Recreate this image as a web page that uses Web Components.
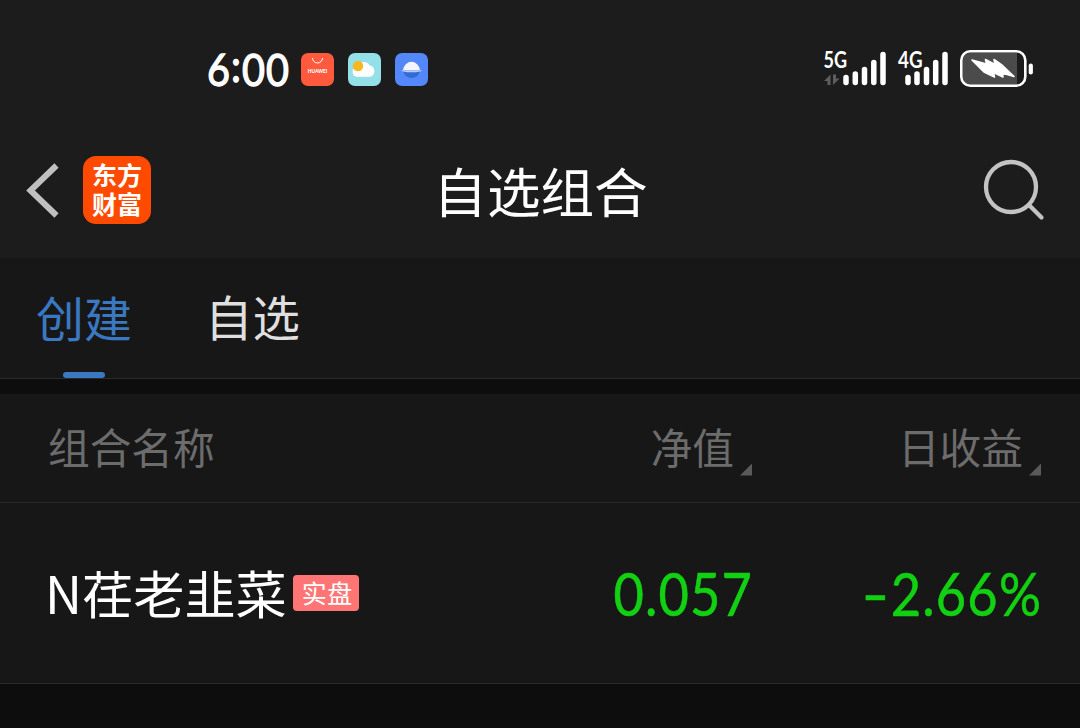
<!DOCTYPE html>
<html lang="zh-CN">
<head>
<meta charset="utf-8">
<title>自选组合</title>
<style>
  body {
    margin: 0;
    background: #0d0d0d;
    font-family: "Noto Sans CJK SC", sans-serif;
    color: #fff;
    overflow: hidden;
  }
</style>
</head>
<body>
<phone-screen>
  <status-bar time="6:00"></status-bar>
  <nav-bar>自选组合</nav-bar>
  <tab-strip>
    <tab-item active>创建</tab-item>
    <tab-item>自选</tab-item>
  </tab-strip>
  <list-header>
    <span slot="name">组合名称</span>
    <sort-label slot="value">净值</sort-label>
    <sort-label slot="profit">日收益</sort-label>
  </list-header>
  <fund-row tag="实盘" value="0.057" profit="-2.66%">N荏老韭菜</fund-row>
</phone-screen>

<script>
const ICONS_SVG = {
  store: `<svg width="33" height="33" viewBox="0 0 33 33">
    <rect width="33" height="33" rx="7" fill="#ff593e"/>
    <path d="M11.5 5a5 5 0 0 0 10 0" fill="none" stroke="#fff" stroke-width="1"/>
    <text x="6.7" y="20" textLength="19.6" lengthAdjust="spacingAndGlyphs" font-family="Lato, sans-serif" font-size="6" font-weight="900" fill="#fff">HUAWEI</text>
  </svg>`,
  weather: `<svg width="33" height="33" viewBox="0 0 33 33">
    <rect width="33" height="33" rx="7" fill="#93e0e9"/>
    <path d="M9 23.700a4.800 4.800 0 0 1-.5-9.500A7.300 7.300 0 0 1 21.500 12.200A6 6 0 0 1 22.500 23.700z" fill="#fff"/>
    <circle cx="10" cy="13" r="5.200" fill="#f5b820"/>
  </svg>`,
  browser: `<svg width="33" height="33" viewBox="0 0 33 33">
    <rect width="33" height="33" rx="7" fill="#5487fa"/>
    <path d="M8.500 18a8 7 0 0 0 16 0z" fill="#3569d4"/>
    <path d="M8 17a8.600 9.600 0 0 1 17 0z" fill="#f4f6fb"/>
    <path d="M6 17.200h21q-1 2-10.500 2T6 17.200z" fill="#b5cdfd"/>
  </svg>`,
  signal5g: `<svg width="66" height="40" viewBox="0 0 66 40">
    <text x="3.500" y="17.500" textLength="23.500" lengthAdjust="spacingAndGlyphs" font-family="Lato, sans-serif" font-size="22" font-weight="700" fill="#fff">5G</text>
    <path d="M10.500 35V24.500L4 31h3.500v-.5V35zM13 24.500V35l6.500-6.500H16v-4z" fill="#5e5e5e"/>
    <g stroke="#fff" stroke-width="5.500" stroke-linecap="round">
      <path d="M26 27.500v5M35.300 24v8.500M44.500 19.500v13M53.800 12.500v20M63 4.500v28"/>
    </g>
  </svg>`,
  signal4g: `<svg width="52" height="40" viewBox="0 0 52 40">
    <text x="1" y="17.500" textLength="24.500" lengthAdjust="spacingAndGlyphs" font-family="Lato, sans-serif" font-size="22" font-weight="700" fill="#fff">4G</text>
    <g stroke="#fff" stroke-width="5.500" stroke-linecap="round">
      <path d="M11 27.500v5M20 24v8.500M29.500 19.500v13M38.700 12.500v20M48 4.500v28"/>
    </g>
  </svg>`,
  battery: `<svg width="74" height="38" viewBox="0 0 74 38">
    <path d="M10 3h47v32H10q-7 0-7-7V10q0-7 7-7z" fill="#4b4b4b"/>
    <rect x="1.300" y="1.300" width="64" height="34.500" rx="9" fill="none" stroke="#fff" stroke-width="2.600"/>
    <path d="M70.800 15.500v7" stroke="#fff" stroke-width="4.200" stroke-linecap="round"/>
    <path d="M12 10l14.500 4-1-4.500 9.500 5-1-5L42.500 15.500 54 26.500 42 23l1 4-9.500-4.500 1 4.500L24 22z" fill="#fff" stroke="#fff" stroke-width="1.600" stroke-linejoin="round"/>
  </svg>`,
  back: `<svg width="36" height="60" viewBox="0 0 36 60"><path d="M31.500 5.500L5.500 30.500l26 25" fill="none" stroke="#c0c0c0" stroke-width="6"/></svg>`,
  search: `<svg width="62" height="62" viewBox="0 0 62 62"><g fill="none" stroke="#c3c3c3" stroke-width="4.300"><circle cx="28" cy="28" r="25"/><path d="M46 46l12.500 12.500" stroke-linecap="round"/></g></svg>`
};

// base class: clones a template into an open shadow root
class BaseElement extends HTMLElement {
  constructor() {
    super();
    const template = document.createElement("template");
    template.innerHTML = this.html();
    this.attachShadow({ mode: "open" }).appendChild(template.content.cloneNode(true));
  }
  attr(name) {
    return this.getAttribute(name) || "";
  }
}

class PhoneScreen extends BaseElement {
  html() {
    return `
      <style>
        :host { display: flex; flex-direction: column; width: 1080px; height: 728px; background: #0d0d0d; }
      </style>
      <slot></slot>
    `;
  }
}

class StatusBar extends BaseElement {
  // the colon sits centred on the digits
  time() {
    return this.attr("time").replace(":", "<b>:</b>");
  }
  html() {
    return `
      <style>
        :host { display: flex; justify-content: space-between; box-sizing: border-box; height: 130px; padding: 50px 46px 0 207px; background: #1c1c1c; }
        svg { display: block; flex: none; overflow: visible; }
        .left, .right { display: flex; align-items: flex-start; height: 40px; }
        .time { width: 94px; font: 400 45px/39px Lato, sans-serif; letter-spacing: 1.200px; -webkit-text-stroke: 1.300px #fff; white-space: nowrap; }
        .time span { display: inline-block; transform: scaleX(.88); transform-origin: left; }
        .time b { display: inline-block; font-weight: 400; transform: translateY(-4px); }
        .apps { display: flex; gap: 14px; padding-top: 3px; }
        .right { gap: 11px; }
      </style>
      <div class="left">
        <div class="time"><span>${this.time()}</span></div>
        <div class="apps">${ICONS_SVG.store}${ICONS_SVG.weather}${ICONS_SVG.browser}</div>
      </div>
      <div class="right">${ICONS_SVG.signal5g}${ICONS_SVG.signal4g}${ICONS_SVG.battery}</div>
    `;
  }
}

class BrandLogo extends BaseElement {
  html() {
    return `
      <style>
        :host { display: flex; align-items: center; justify-content: center; width: 68px; height: 68px; border-radius: 13px; background: #ff4a00; }
        div { width: 50px; font-size: 25px; font-weight: 700; line-height: 29px; padding-bottom: 2px; }
      </style>
      <div>东方财富</div>
    `;
  }
}

class NavBar extends BaseElement {
  html() {
    return `
      <style>
        :host { display: grid; grid-template-columns: 1fr auto 1fr; align-items: center; box-sizing: border-box; height: 128px; padding: 0 35px 8px 25px; background: #1c1c1c; }
        svg { display: block; }
        .left { display: flex; align-items: center; gap: 22px; }
        .title { padding: 0 0 1px 11px; font-size: 53.600px; line-height: 70px; white-space: nowrap; }
        .right { display: flex; justify-content: flex-end; }
      </style>
      <div class="left">${ICONS_SVG.back}<brand-logo></brand-logo></div>
      <div class="title"><slot></slot></div>
      <div class="right">${ICONS_SVG.search}</div>
    `;
  }
}

class TabStrip extends BaseElement {
  html() {
    return `
      <style>
        :host { display: flex; gap: 73px; box-sizing: border-box; height: 121px; padding-left: 36px; margin-bottom: 15px; background: #171717; border-bottom: 1px solid #2a2a2a; }
      </style>
      <slot></slot>
    `;
  }
}

class TabItem extends BaseElement {
  html() {
    return `
      <style>
        :host { display: flex; flex-direction: column; justify-content: space-between; align-items: center; color: #dfdfdf; font-size: 47.500px; line-height: 60px; padding-top: 28px; white-space: nowrap; }
        :host([active]) { color: #3a78c2; font-size: 48px; }
        .line { width: 42px; height: 6px; border-radius: 3px; }
        :host([active]) .line { background: #3a78c2; }
      </style>
      <div><slot></slot></div>
      <div class="line"></div>
    `;
  }
}

class ListHeader extends BaseElement {
  html() {
    return `
      <style>
        :host { display: grid; grid-template-columns: 1fr 240px 289px; align-items: center; box-sizing: border-box; height: 109px; padding: 0 39px 5px 48px; background: #171717; border-bottom: 1px solid #2a2a2a; color: #6c6c6c; font-size: 41.700px; line-height: 60px; white-space: nowrap; }
      </style>
      <slot name="name"></slot>
      <slot name="value"></slot>
      <slot name="profit"></slot>
    `;
  }
}

class SortLabel extends BaseElement {
  html() {
    return `
      <style>
        :host { display: flex; justify-content: flex-end; align-items: flex-end; gap: 6px; }
        .arrow { width: 12px; height: 12px; background: #5a5a5c; clip-path: polygon(100% 0, 100% 100%, 0 100%); }
      </style>
      <span><slot></slot></span>
      <i class="arrow"></i>
    `;
  }
}

class FundRow extends BaseElement {
  // the minus sign is drawn wider than the font's hyphen
  number(text) {
    return text.replace("-", "<b>-</b>");
  }
  html() {
    return `
      <style>
        :host { display: grid; grid-template-columns: 1fr 240px 289px; align-items: center; box-sizing: border-box; height: 181px; padding: 0 38px 0 45px; background: #171717; border-bottom: 1px solid #2a2a2a; white-space: nowrap; }
        .name { display: flex; align-items: center; gap: 6px; }
        .label { font-size: 51.200px; line-height: 60px; padding-bottom: 3px; }
        .tag { box-sizing: border-box; width: 66px; height: 36px; padding-left: 9px; border-radius: 4px; background: #ff7575; font-size: 25px; line-height: 34px; letter-spacing: .500px; }
        .num { color: #12d012; font: 400 59.500px/70px Lato, sans-serif; letter-spacing: 1.300px; text-align: right; -webkit-text-stroke: .600px #12d012; transform: scaleX(.88); transform-origin: right; }
        .num b { display: inline-block; font-weight: 400; margin-right: 5px; transform: scaleX(1.450); }
      </style>
      <div class="name"><span class="label"><slot></slot></span><span class="tag">${this.attr("tag")}</span></div>
      <div class="num">${this.number(this.attr("value"))}</div>
      <div class="num">${this.number(this.attr("profit"))}</div>
    `;
  }
}

customElements.define("phone-screen", PhoneScreen);
customElements.define("status-bar", StatusBar);
customElements.define("brand-logo", BrandLogo);
customElements.define("nav-bar", NavBar);
customElements.define("tab-strip", TabStrip);
customElements.define("tab-item", TabItem);
customElements.define("list-header", ListHeader);
customElements.define("sort-label", SortLabel);
customElements.define("fund-row", FundRow);
</script>
</body>
</html>
